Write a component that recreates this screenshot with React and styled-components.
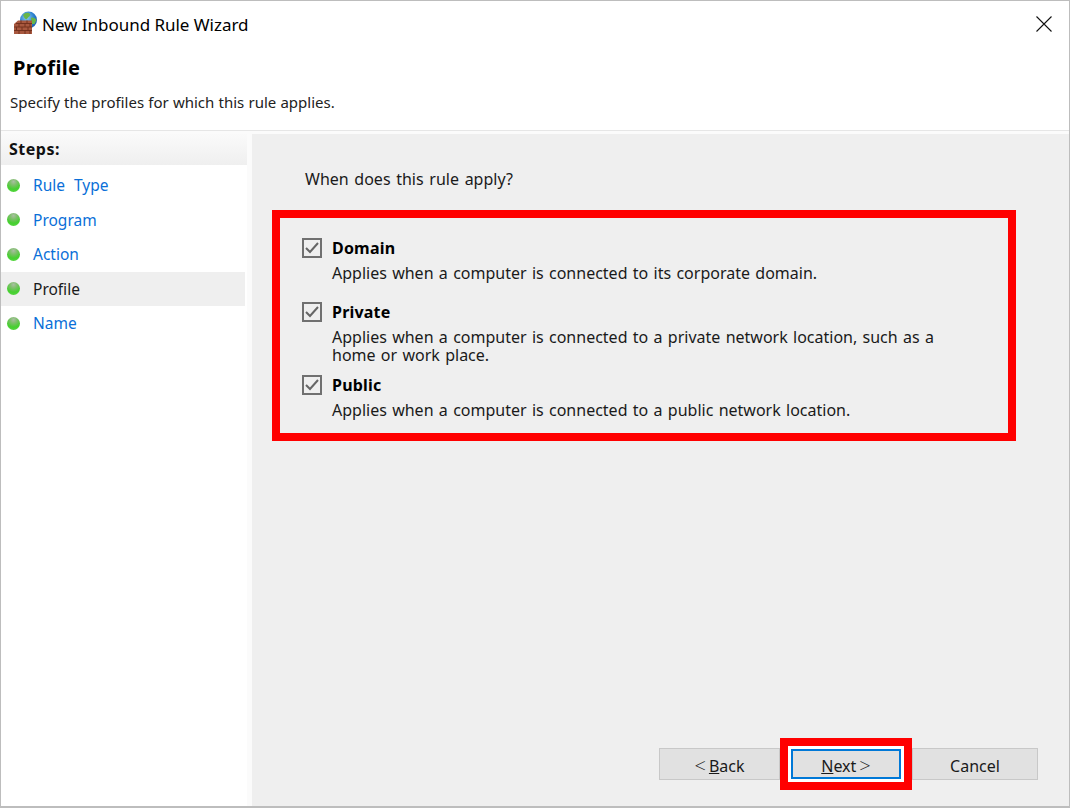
import styled, { createGlobalStyle } from "styled-components";

const GlobalStyle = createGlobalStyle`
  html, body {
    margin: 0;
    padding: 0;
    background: #fff;
  }
  * {
    box-sizing: border-box;
  }
`;

const steps = [
  { name: "Rule Type" },
  { name: "Program" },
  { name: "Action" },
  { name: "Profile", active: true },
  { name: "Name" },
];

const profiles = [
  {
    name: "Domain",
    text: "Applies when a computer is connected to its corporate domain.",
    gap: 18,
  },
  {
    name: "Private",
    text: "Applies when a computer is connected to a private network location, such as a home or work place.",
    gap: 9,
  },
  {
    name: "Public",
    text: "Applies when a computer is connected to a public network location.",
    gap: 0,
  },
];

function FirewallIcon() {
  return (
    <svg width="24" height="24" viewBox="0 0 24 24">
      <defs>
        <radialGradient id="globe" cx="0.4" cy="0.35" r="0.7">
          <stop offset="0" stopColor="#8fd0f2" />
          <stop offset="0.6" stopColor="#2b80cf" />
          <stop offset="1" stopColor="#1a5aa8" />
        </radialGradient>
      </defs>
      <circle cx="15.500" cy="10" r="8.500" fill="url(#globe)" />
      <path d="M10 5c2-2.500 5-3 7-1 1 2-2 3-3 5-2 1-3-2-4-4z" fill="#69b548" />
      <path d="M18 8c2-1 4 0 5.500 2l-2 4h-3z" fill="#69b548" />
      <path d="M1 14 L5 10.500 H19 V24 H1z" fill="#a8583f" />
      <path
        d="M3 13.500h16M1 17h18M1 20.500h18M8 10.500v3M14 10.500v3M6 13.500V17M12 13.500V17M17 13.500V17M3.500 17v3.500M9 17v3.500M15 17v3.500M6 20.500V24M12 20.500V24M17 20.500V24"
        stroke="#74321f"
        strokeWidth="1"
        fill="none"
      />
    </svg>
  );
}

function CheckMark() {
  return (
    <svg width="16" height="16" viewBox="0 0 16 16">
      <path d="M2 8 L6 12 L14 3" fill="none" stroke="#666" strokeWidth="2" />
    </svg>
  );
}

export default function App() {
  return (
    <>
      <GlobalStyle />
      <Wizard>
        <TitleBar>
          <FirewallIcon />
          <Title>New Inbound Rule Wizard</Title>
          <CloseIcon width="16" height="16" viewBox="0 0 16 16">
            <path d="M0.500 0.500 L15.500 15.500 M15.500 0.500 L0.500 15.500" stroke="#111" strokeWidth="1.100" fill="none" />
          </CloseIcon>
        </TitleBar>
        <Header>
          <Heading>Profile</Heading>
          <Subheading>Specify the profiles for which this rule applies.</Subheading>
        </Header>
        <Body>
          <Sidebar>
            <StepsTitle>Steps:</StepsTitle>
            {steps.map((step) => (
              <StepRow key={step.name} $active={step.active}>
                <Bullet />
                <StepName $active={step.active}>{step.name}</StepName>
              </StepRow>
            ))}
          </Sidebar>
          <Main>
            <Question>When does this rule apply?</Question>
            <Highlight>
              {profiles.map((profile) => (
                <Option key={profile.name} $gap={profile.gap}>
                  <Checkbox>
                    <CheckMark />
                  </Checkbox>
                  <OptionText>
                    <OptionName>{profile.name}</OptionName>
                    <OptionDescription>{profile.text}</OptionDescription>
                  </OptionText>
                </Option>
              ))}
            </Highlight>
            <Buttons>
              <Button $width={121}>
                <Chevron>{"<"}</Chevron>
                <Label>
                  <u>B</u>ack
                </Label>
              </Button>
              <NextFrame>
                <NextButton>
                  <Label>
                    <u>N</u>ext
                  </Label>
                  <Chevron>{">"}</Chevron>
                </NextButton>
              </NextFrame>
              <Button $width={126}>
                <Label>Cancel</Label>
              </Button>
            </Buttons>
          </Main>
        </Body>
      </Wizard>
    </>
  );
}

const Wizard = styled.div`
  width: 1070px;
  height: 808px;
  display: flex;
  flex-direction: column;
  border: 1px solid #bdbdbd;
  border-bottom-width: 2px;
  background: #fff;
  font-family: "Noto Sans", "Open Sans", sans-serif;
  font-size: 16px;
  color: #1a1a1a;
  overflow: hidden;
`;

const TitleBar = styled.div`
  height: 43px;
  flex: none;
  display: flex;
  align-items: center;
  padding: 0 17px 2px 12px;
`;

const Title = styled.div`
  margin: 6px 0 0 5px;
  font-size: 17px;
  letter-spacing: -0.03px;
  color: #000;
`;

const CloseIcon = styled.svg`
  margin: 4px 0 0 auto;
`;

const Header = styled.div`
  height: 87px;
  flex: none;
  padding: 10px 0 0 9px;
  border-bottom: 1px solid #e6e6e6;
`;

const Heading = styled.div`
  margin-left: 3px;
  height: 36px;
  font-size: 20px;
  line-height: 28px;
  font-weight: 700;
  letter-spacing: 0.3px;
  color: #000;
`;

const Subheading = styled.div`
  font-size: 15px;
  line-height: 24px;
  word-spacing: 0.3px;
  color: #222;
`;

const Body = styled.div`
  flex: 1;
  display: flex;
  padding-top: 3px;
  background: #fbfbfb;
`;

const Sidebar = styled.div`
  width: 246px;
  flex: none;
  background: #fff;
`;

const StepsTitle = styled.div`
  height: 31px;
  padding-left: 8px;
  font-size: 16px;
  line-height: 31px;
  font-weight: 700;
  letter-spacing: 0.5px;
  color: #111;
  background: linear-gradient(#fafafa, #efefef);
  margin-bottom: 3px;
`;

const StepRow = styled.div`
  height: 34.500px;
  display: flex;
  align-items: center;
  padding-left: 6px;
  margin-right: 2px;
  background: ${(p) => (p.$active ? "#efefef" : "transparent")};
`;

const Bullet = styled.span`
  width: 13px;
  height: 13px;
  border-radius: 50%;
  background: radial-gradient(circle at 50% 20%, #a9bfa2 0, #7fbf6c 28%, #46cf30 62%, #5cd948 100%);
`;

const StepName = styled.span`
  margin-left: 13px;
  font-size: 15.500px;
  word-spacing: 5px;
  color: ${(p) => (p.$active ? "#1a1a1a" : "#0a6fd8")};
`;

const Main = styled.div`
  flex: 1;
  margin-left: 5px;
  display: flex;
  flex-direction: column;
  padding: 0 31px 16px 20px;
  background: #efefef;
`;

const Question = styled.div`
  margin: 33px 0 0 33px;
  font-size: 16px;
  line-height: 24px;
  word-spacing: 1.500px;
`;

const Highlight = styled.div`
  width: 744px;
  height: 231px;
  margin-top: 19px;
  padding: 18px 40px 0 22px;
  border: 8px solid #ff0000;
`;

const Option = styled.div`
  display: flex;
  align-items: flex-start;
  margin-bottom: ${(p) => p.$gap}px;
`;

const Checkbox = styled.span`
  width: 20px;
  height: 20px;
  flex: none;
  margin-top: 2px;
  display: flex;
  align-items: center;
  justify-content: center;
  border: 2px solid #707070;
`;

const OptionText = styled.div`
  margin-left: 10px;
`;

const OptionName = styled.div`
  font-size: 16px;
  line-height: 24px;
  font-weight: 700;
  letter-spacing: 0.2px;
  color: #000;
`;

const OptionDescription = styled.div`
  max-width: 620px;
  font-size: 16px;
  line-height: 18px;
  padding-top: 4px;
  word-spacing: 1.150px;
`;

const Buttons = styled.div`
  margin-top: auto;
  margin-left: 387px;
  display: flex;
  align-items: center;
  height: 52px;
`;

const Button = styled.div`
  width: ${(p) => p.$width}px;
  height: 32px;
  display: flex;
  align-items: center;
  justify-content: center;
  gap: 3px;
  padding-top: 3px;
  background: #e1e1e1;
  border: 1px solid #c8c8c8;
`;

const NextFrame = styled.div`
  width: 132px;
  height: 52px;
  flex: none;
  padding: 3px;
  background: #fff;
  border: 8px solid #ff0000;
`;

const NextButton = styled.div`
  height: 100%;
  display: flex;
  align-items: center;
  justify-content: center;
  gap: 3px;
  padding-top: 3px;
  background: #e1e1e1;
  border: 2px solid #0078d7;
`;

const Label = styled.span`
  font-size: 16px;
`;

const Chevron = styled.span`
  font-family: "Open Sans", sans-serif;
  font-size: 20px;
  font-weight: 300;
  line-height: 20px;
`;
